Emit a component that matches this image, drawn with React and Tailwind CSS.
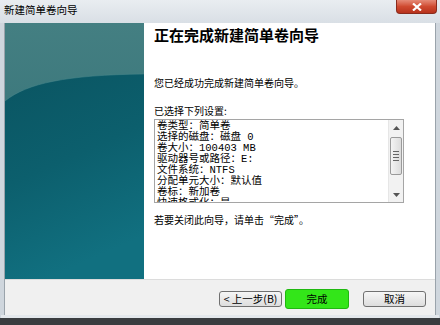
import React from "react";

const cjk = { fontFamily: '"Noto Sans CJK SC", "Noto Sans", sans-serif' };
const boxFont = { fontFamily: '"Liberation Mono", "Noto Sans CJK SC", monospace' };

function TealPanel() {
  return (
    <div className="w-[139px] shrink-0 bg-[#3c787b]">
      <svg width="139" height="256" viewBox="0 0 139 256" className="block">
        <defs>
          <linearGradient id="top" x1="0" y1="0" x2="0" y2="1">
            <stop offset="0" stopColor="#447f82" />
            <stop offset="1" stopColor="#2f6d73" />
          </linearGradient>
          <linearGradient id="main" x1="0" y1="0" x2="0.3" y2="1">
            <stop offset="0" stopColor="#0a5562" />
            <stop offset="0.5" stopColor="#0c5f6d" />
            <stop offset="1" stopColor="#117080" />
          </linearGradient>
        </defs>
        <rect width="139" height="256" fill="url(#top)" />
        <path d="M0 78 C 22 60, 62 52, 139 51 L139 256 L0 256 Z" fill="url(#main)" />
        <path d="M0 78 C 22 60, 62 52, 139 51" fill="none" stroke="#4b8a8d" strokeOpacity="0.5" />
      </svg>
    </div>
  );
}

function SettingsBox() {
  const lines = [
    "卷类型：简单卷",
    "选择的磁盘：磁盘 0",
    "卷大小：100403 MB",
    "驱动器号或路径：E:",
    "文件系统：NTFS",
    "分配单元大小：默认值",
    "卷标：新加卷",
    "快速格式化：是",
  ];
  return (
    <div className="mt-[2px] flex h-[84px] w-[250px] border border-[#a5a5a5] bg-white">
      <div
        className="flex-1 overflow-hidden pl-[2px] pt-[1px] text-[10.5px] leading-[11px] text-black"
        style={boxFont}
      >
        {lines.map((l) => (
          <div key={l} className="whitespace-nowrap">{l}</div>
        ))}
      </div>
      <div className="flex w-[15px] flex-col items-center border-l border-[#e6e6e6] bg-[#f2f2f2]">
        <div className="flex h-[15px] items-center justify-center">
          <svg width="7" height="4" viewBox="0 0 7 4"><path d="M0 4 L3.5 0 L7 4 Z" fill="#555" /></svg>
        </div>
        <div className="mt-[2px] flex h-[38px] w-[12px] flex-col items-center justify-center gap-[2px] rounded-[2px] border border-[#9a9a9a] bg-gradient-to-r from-[#f4f4f4] to-[#dcdcdc]">
          <div className="h-px w-[6px] bg-[#666]" />
          <div className="h-px w-[6px] bg-[#666]" />
          <div className="h-px w-[6px] bg-[#666]" />
          <div className="h-px w-[6px] bg-[#666]" />
        </div>
        <div className="flex-1" />
        <div className="flex h-[14px] items-center justify-center">
          <svg width="7" height="4" viewBox="0 0 7 4"><path d="M0 0 L3.5 4 L7 0 Z" fill="#555" /></svg>
        </div>
      </div>
    </div>
  );
}

function Btn({ children, green }) {
  return (
    <div
      className={
        green
          ? "flex h-[20px] w-[64px] items-center justify-center rounded-[3px] border border-[#1fb810] bg-[#33e619] text-[10.5px] text-black"
          : "flex h-[16px] w-[63px] items-center justify-center rounded-[3px] border border-[#707070] bg-gradient-to-b from-[#f6f6f6] to-[#dddddd] text-[10.5px] text-black"
      }
    >
      {children}
    </div>
  );
}

export default function App() {
  return (
    <div className="relative h-[325px] w-[440px] overflow-hidden bg-[#cfd6dd]" style={cjk}>
      {/* title bar */}
      <div className="flex h-[23px] items-start justify-between bg-gradient-to-b from-[#e9edf1] to-[#d9dfe5]">
        <div className="pl-[4px] pt-[3px] text-[10.5px] leading-[14px] text-black">新建简单卷向导</div>
        <div className="mr-[3px] flex h-[14px] w-[41px] items-center justify-center rounded-b-[4px] border border-t-0 border-[#8a2b1c] bg-gradient-to-b from-[#e58a77] via-[#cf4a30] to-[#b8321c]">
          <svg width="10" height="8" viewBox="0 0 10 8">
            <path d="M1 0.5 L9 7.5 M9 0.5 L1 7.5" stroke="#fff" strokeWidth="2.2" />
          </svg>
        </div>
      </div>

      {/* client */}
      <div className="mx-[4px] border-x border-[#9aa3ab]">
        <div className="flex h-[256px]">
          <TealPanel />
          <div className="flex-1 bg-white pl-[10px] text-[10px] leading-[13px] text-black">
            <div className="pt-[3px] text-[15px] font-bold leading-[18px]">正在完成新建简单卷向导</div>
            <div className="mt-[32px]">您已经成功完成新建简单卷向导。</div>
            <div className="mt-[15px]">已选择下列设置:</div>
            <SettingsBox />
            <div className="mt-[10px]">若要关闭此向导，请单击“完成”。</div>
          </div>
        </div>
        <div className="flex h-[36px] items-center justify-end gap-[3px] border-t border-[#dcdcdc] bg-[#f0f0f0] pr-[9px] pt-[2px]">
          <Btn>&lt; 上一步(B)</Btn>
          <Btn green>完成</Btn>
          <div className="w-[8px]" />
          <Btn>取消</Btn>
        </div>
      </div>
      <div className="mx-[1px] h-[3px] bg-[#e4e8ec]" />
      <div className="h-[7px] bg-[#3a3d40]" />
    </div>
  );
}
